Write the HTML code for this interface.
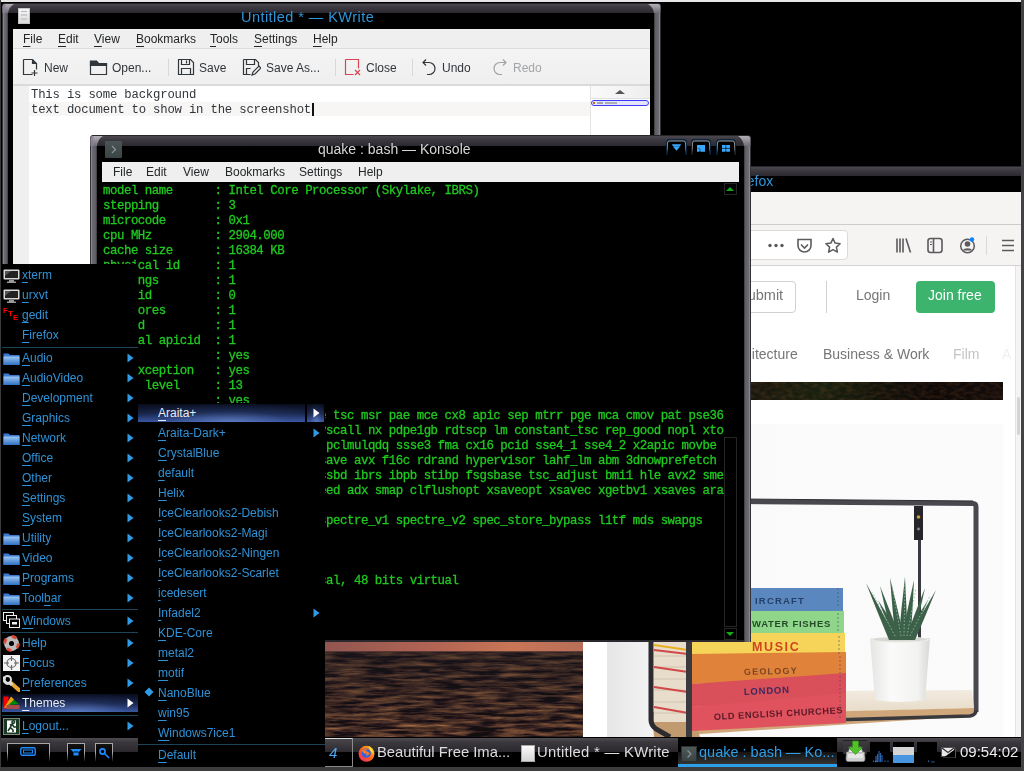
<!DOCTYPE html>
<html><head><meta charset="utf-8">
<style>
*{margin:0;padding:0;box-sizing:border-box}
html,body{width:1024px;height:771px;overflow:hidden;background:#000;font-family:"Liberation Sans",sans-serif}
.a{position:absolute;white-space:nowrap}
.mono{font-family:"Liberation Mono",monospace}
/* top strip */
#strip{left:1px;top:0;width:1020px;height:2px;background:#e6e6e6}
/* window frames */
.frame{background:linear-gradient(#3d3b3f,#2a282c 60%,#232125);border-radius:6px 6px 0 0}
.fl{background:linear-gradient(90deg,#8d8694,#5c5960 40%,#4a474c)}
.fr{background:linear-gradient(90deg,#4a474c,#5c5960 60%,#8d8694)}
.title{background:#000}
/* kwrite */
#kw{left:2px;top:3px;width:659px;height:300px}
.kmenu span{position:absolute;top:0}
u{text-decoration:underline;text-underline-offset:2.5px;text-decoration-thickness:1.3px}
</style></head><body>
<div id="strip" class="a"></div>

<!-- ============ KWRITE ============ -->
<div class="a" style="left:2px;top:3px;width:659px;height:420px;background:#2c292e;border-radius:4px 4px 0 0"></div>
<div class="a" style="left:2px;top:3px;width:659px;height:10px;background:linear-gradient(#2a272b 0,#2a272b 1px,#4c4850 1px,#3e3a42 40%,#2c2830);border-radius:4px 4px 0 0"></div>
<div class="a" style="left:2px;top:6px;width:6px;height:417px;background:linear-gradient(90deg,#333135 0,#333135 0.6px,#8c8096 0.6px,#8c8096 2px,#6e6c74 2px,#5e5c64 80%,#38363a)"></div>
<div class="a" style="left:654px;top:6px;width:7px;height:417px;background:linear-gradient(270deg,#333135 0,#333135 0.6px,#8c8096 0.6px,#8c8096 2px,#6e6c74 2px,#5e5c64 80%,#38363a)"></div>
<svg class="a" style="left:2px;top:3px" width="12" height="10" viewBox="0 0 12 10"><defs><linearGradient id="chkw" x1="0" y1="0" x2="0" y2="1"><stop offset="0" stop-color="#b4b0b8"/><stop offset="1" stop-color="#6e6c74"/></linearGradient></defs><path d="M0.6 10V4Q0.6 1 3.5 1H12Q7 4 6 10z" fill="url(#chkw)"/><path d="M0.6 10V4Q0.6 1 3.5 1V10z" fill="#8c8096" opacity="0.8"/></svg>
<svg class="a" style="left:648px;top:3px" width="13" height="10" viewBox="0 0 13 10"><path d="M12.4 10V4Q12.4 1 9.5 1H0Q5 4 6 10z" fill="url(#chkw)"/></svg>
<div class="a" style="left:8px;top:13px;width:646px;height:410px;background:#000"></div>
<div class="a" style="left:18px;top:8px;width:12px;height:16px;background:linear-gradient(#f6f6f6,#dadada);border:1px solid #c4c4c4"></div>
<div class="a" style="left:21px;top:11px;width:6px;height:1px;background:#bbb"></div><div class="a" style="left:21px;top:14px;width:6px;height:2px;background:#ccc"></div><div class="a" style="left:21px;top:18px;width:6px;height:2px;background:#ccc"></div>
<div class="a" style="left:241px;top:9px;font-size:14.5px;letter-spacing:0.45px;color:#2f95d8;white-space:nowrap">Untitled * — KWrite</div>
<!-- menubar -->
<div class="a" style="left:13px;top:29px;width:637px;height:20px;background:#efefef;border-bottom:1px solid #dcdcdc"></div>
<div class="a kmenu" style="left:0;top:32px;font-size:12px;color:#232627;white-space:nowrap">
<span style="left:23px"><u>F</u>ile</span>
<span style="left:58px"><u>E</u>dit</span>
<span style="left:94px"><u>V</u>iew</span>
<span style="left:136px"><u>B</u>ookmarks</span>
<span style="left:210px"><u>T</u>ools</span>
<span style="left:254px"><u>S</u>ettings</span>
<span style="left:313px"><u>H</u>elp</span>
</div>
<!-- toolbar -->
<div class="a" style="left:13px;top:49px;width:637px;height:37px;background:linear-gradient(#f4f4f4,#efefef);border-bottom:2px solid #dadada"></div>
<div class="a" style="left:0;top:0">
<svg class="a" style="left:22px;top:58px" width="18" height="18" viewBox="0 0 18 18" fill="none" stroke="#31363b" stroke-width="1.2"><path d="M1.5 1.5h9l4 4v6M1.5 1.5v15h9"/><path d="M10.5 1.5v4h4" fill="#31363b"/><path d="M12.5 12v6M9.5 15h6"/></svg>
<div class="a" style="left:44px;top:61px;font-size:12px;color:#31363b">New</div>
<svg class="a" style="left:89px;top:58px" width="19" height="18" viewBox="0 0 19 18" fill="none" stroke="#31363b" stroke-width="1.2"><path d="M1.5 3.5h6l2 2h8v11h-16z"/><path d="M1.5 3h6l2 2.5h8v2h-16z" fill="#31363b"/></svg>
<div class="a" style="left:112px;top:61px;font-size:12px;color:#31363b">Open...</div>
<div class="a" style="left:168px;top:59px;width:1px;height:17px;background:#d8d8d8"></div>
<svg class="a" style="left:177px;top:58px" width="18" height="18" viewBox="0 0 18 18" fill="none" stroke="#31363b" stroke-width="1.2"><path d="M1.5 1.5h12l3 3v12h-15z"/><path d="M4.5 1.5v5h8v-5M4.5 16.5v-6h9v6"/><path d="M9.5 2.5v3"/></svg>
<div class="a" style="left:199px;top:61px;font-size:12px;color:#31363b">Save</div>
<svg class="a" style="left:242px;top:58px" width="19" height="18" viewBox="0 0 19 18" fill="none" stroke="#31363b" stroke-width="1.2"><path d="M1.5 1.5h12l3 3v4M1.5 1.5v15h7"/><path d="M4.5 1.5v5h8v-5M4.5 16.5v-6h4"/><path d="M10 17l1-3 6-6 2 2-6 6z"/></svg>
<div class="a" style="left:266px;top:61px;font-size:12px;color:#31363b">Save As...</div>
<div class="a" style="left:335px;top:59px;width:1px;height:17px;background:#d8d8d8"></div>
<svg class="a" style="left:344px;top:58px" width="18" height="18" viewBox="0 0 18 18" fill="none" stroke="#da4453" stroke-width="1.2"><path d="M1.5 1.5h13v9M1.5 1.5v15h8"/><path d="M11 12l5 5M16 12l-5 5"/></svg>
<div class="a" style="left:366px;top:61px;font-size:12px;color:#31363b">Close</div>
<div class="a" style="left:412px;top:59px;width:1px;height:17px;background:#d8d8d8"></div>
<svg class="a" style="left:421px;top:58px" width="17" height="18" viewBox="0 0 17 18" fill="none" stroke="#31363b" stroke-width="1.2"><path d="M5 1.5l-3 3 3 3M2 4.5h6a6 6 0 0 1 0 12h-2"/></svg>
<div class="a" style="left:442px;top:61px;font-size:12px;color:#31363b">Undo</div>
<svg class="a" style="left:491px;top:58px" width="17" height="18" viewBox="0 0 17 18" fill="none" stroke="#a0a2a4" stroke-width="1.2"><path d="M12 1.5l3 3-3 3M15 4.5h-6a6 6 0 0 0 0 12h2"/></svg>
<div class="a" style="left:513px;top:61px;font-size:12px;color:#a3a5a7">Redo</div>
</div>
<!-- edit area -->
<div class="a" style="left:13px;top:86px;width:577px;height:330px;background:#fff"></div>
<div class="a" style="left:13px;top:86px;width:16px;height:330px;background:#efefef"></div>
<div class="a" style="left:29px;top:102px;width:561px;height:14px;background:#f7f6f5"></div>
<div class="a mono" style="left:31px;top:88px;font-size:12.3px;letter-spacing:-0.2px;line-height:15px;color:#31363b;white-space:pre">This is some background
text document to show in the screenshot</div>
<div class="a" style="left:312px;top:103px;width:2px;height:13px;background:#111"></div>
<!-- minimap -->
<div class="a" style="left:590px;top:86px;width:60px;height:330px;background:#fff;border-left:1px solid #e4e4e4"></div>
<div class="a" style="left:591px;top:86px;width:59px;height:13px;background:linear-gradient(90deg,#fafafa,#eee);border-bottom:1px solid #e0e0e0"></div>
<div class="a" style="left:615px;top:90px;width:0;height:0;border-left:5px solid transparent;border-right:5px solid transparent;border-bottom:4px solid #555"></div>
<div class="a" style="left:591px;top:100px;width:58px;height:6px;border:1.5px solid #3c3cf4;border-radius:3px;background:#e4e4fa"></div>
<div class="a" style="left:593px;top:102px;width:2px;height:2px;background:#c86a20"></div>
<div class="a" style="left:597px;top:102px;width:20px;height:2px;background:linear-gradient(90deg,#777 0 30%,transparent 30% 40%,#888 40% 100%);opacity:.6"></div>

<!-- ============ FIREFOX ============ -->
<div class="a" style="left:662px;top:166px;width:366px;height:580px;background:#2c292e;border-radius:4px 4px 0 0"></div>
<div class="a" style="left:662px;top:166px;width:366px;height:10px;background:linear-gradient(#2a272b 0,#2a272b 1px,#4c4850 1px,#3e3a42 40%,#2c2830);border-radius:4px 4px 0 0"></div>
<div class="a" style="left:662px;top:169px;width:7px;height:577px;background:linear-gradient(90deg,#333135 0,#333135 0.6px,#8c8096 0.6px,#8c8096 2px,#6e6c74 2px,#5e5c64 80%,#38363a)"></div>
<div class="a" style="left:1021px;top:169px;width:7px;height:577px;background:linear-gradient(270deg,#333135 0,#333135 0.6px,#8c8096 0.6px,#8c8096 2px,#6e6c74 2px,#5e5c64 80%,#38363a)"></div>
<svg class="a" style="left:662px;top:166px" width="13" height="10" viewBox="0 0 13 10"><defs><linearGradient id="chff" x1="0" y1="0" x2="0" y2="1"><stop offset="0" stop-color="#b4b0b8"/><stop offset="1" stop-color="#6e6c74"/></linearGradient></defs><path d="M0.6 10V4Q0.6 1 3.5 1H13Q8 4 7 10z" fill="url(#chff)"/><path d="M0.6 10V4Q0.6 1 3.5 1V10z" fill="#8c8096" opacity="0.8"/></svg>
<svg class="a" style="left:1015px;top:166px" width="13" height="10" viewBox="0 0 13 10"><path d="M12.4 10V4Q12.4 1 9.5 1H0Q5 4 6 10z" fill="url(#chff)"/></svg>
<div class="a" style="left:669px;top:176px;width:352px;height:570px;background:#000"></div>
<div class="a" style="left:1005px;top:166px;width:19px;height:10px;background:linear-gradient(#2a272b 0,#2a272b 1px,#4c4850 1px,#3e3a42 40%,#2c2830)"></div>
<div class="a" style="left:1021px;top:176px;width:3px;height:562px;background:linear-gradient(90deg,#38363a,#5e5c64 50%,#6e6c74)"></div>
<div class="a" style="left:683px;top:173px;font-size:14px;color:#2f95d8">Mozilla Firefox</div>
<div class="a" style="left:662px;top:192px;width:359px;height:33px;background:#f5f4f2;border-bottom:1px solid #cfcdcb"></div>
<div class="a" style="left:662px;top:225px;width:359px;height:41px;background:#f5f4f2;border-bottom:1px solid #d5d2cf"></div>
<div class="a" style="left:600px;top:230px;width:248px;height:30px;background:#fff;border:1px solid #dcd9d6;border-radius:4px"></div>
<!-- page actions -->
<svg class="a" style="left:766px;top:237px" width="80" height="17" viewBox="0 0 80 17">
<circle cx="4" cy="8.5" r="1.7" fill="#5b5b5e"/><circle cx="10" cy="8.5" r="1.7" fill="#5b5b5e"/><circle cx="16" cy="8.5" r="1.7" fill="#5b5b5e"/>
<path d="M32 2.5h13v6a6.5 6.5 0 0 1-13 0z" fill="none" stroke="#5b5b5e" stroke-width="1.6"/><path d="M35 7.5l3.5 3.5 3.5-3.5" fill="none" stroke="#5b5b5e" stroke-width="1.6"/>
<path d="M67 1.5l2.1 4.6 5 .6-3.7 3.4 1 5-4.4-2.5-4.4 2.5 1-5-3.7-3.4 5-.6z" fill="none" stroke="#5b5b5e" stroke-width="1.5" stroke-linejoin="round"/>
</svg>
<svg class="a" style="left:894px;top:236px" width="124" height="19" viewBox="0 0 124 19">
<path d="M3 2.5v14M6 2.5v14M9 2.5v14M12 2.5l4.5 14" stroke="#5b5b5e" stroke-width="1.6" fill="none"/>
<rect x="34" y="2.5" width="14" height="14" rx="2.5" fill="none" stroke="#5b5b5e" stroke-width="1.6"/><path d="M39.5 3v13" stroke="#5b5b5e" stroke-width="1.6"/><path d="M36 6h2M36 8.5h2" stroke="#5b5b5e" stroke-width="1"/>
<circle cx="73.5" cy="10" r="6.8" fill="none" stroke="#5b5b5e" stroke-width="1.5"/><circle cx="73.5" cy="8" r="2.8" fill="#5b5b5e"/><path d="M68.5 14.5a5.5 4 0 0 1 10 0" fill="#5b5b5e"/><circle cx="78" cy="3.5" r="2.2" fill="#0a84ff"/>
<path d="M92.5 -7v26" stroke="#dcdad8" stroke-width="1"/>
<path d="M108 4.5h12M108 9.5h12M108 14.5h12" stroke="#5b5b5e" stroke-width="1.6"/>
</svg>
<!-- page -->
<div class="a" style="left:662px;top:266px;width:359px;height:472px;background:#fff"></div>
<div class="a" style="left:1015px;top:266px;width:6px;height:471px;background:#f4f4f4;border-left:1px solid #e4e4e4"></div>
<div class="a" style="left:1017px;top:397px;width:3px;height:38px;background:#d4d4d4;border-radius:2px"></div>
<div class="a" style="left:700px;top:281px;width:96px;height:32px;border:1px solid #d1d1d1;border-radius:4px"></div>
<div class="a" style="left:738px;top:287px;font-size:14.5px;color:#767676">Submit</div>
<div class="a" style="left:826px;top:281px;width:1px;height:32px;background:#d1d1d1"></div>
<div class="a" style="left:856px;top:287px;font-size:14px;color:#767676">Login</div>
<div class="a" style="left:916px;top:281px;width:79px;height:32px;background:#3cb46e;border-radius:4px"></div>
<div class="a" style="left:928px;top:287px;font-size:14px;color:#fff">Join free</div>
<div class="a" style="left:723px;top:346px;font-size:14px;color:#767676">Architecture</div>
<div class="a" style="left:823px;top:346px;font-size:14px;color:#767676">Business &amp; Work</div>
<div class="a" style="left:953px;top:346px;font-size:14px;color:#c4c4c4">Film</div>
<div class="a" style="left:1002px;top:346px;font-size:14px;color:#f0f0f0">A</div>

<!-- photos -->
<div class="a" style="left:300px;top:424px;width:703px;height:314px;background:#fff"></div>
<svg class="a" style="left:300px;top:642px" width="283" height="95" viewBox="0 0 283 95">
<defs>
<filter id="sea" x="0" y="0" width="100%" height="100%" color-interpolation-filters="sRGB">
<feTurbulence type="fractalNoise" baseFrequency="0.03 0.28" numOctaves="4" seed="7" result="n"/>
<feColorMatrix in="n" type="matrix" values="0 0 0 1.5 -0.46  0 0 0 1.0 -0.33  0 0 0 0.5 -0.12  0 0 0 0 1"/>
</filter>
<linearGradient id="sky" x1="0" y1="0" x2="1" y2="0"><stop offset="0" stop-color="#8a5250"/><stop offset="0.5" stop-color="#b46654"/><stop offset="0.75" stop-color="#c87656"/><stop offset="1" stop-color="#b86e58"/></linearGradient>
<linearGradient id="seag" x1="0" y1="0" x2="0" y2="1"><stop offset="0" stop-color="#3a2c2e"/><stop offset="0.5" stop-color="#34282a"/><stop offset="1" stop-color="#4a3630"/></linearGradient>
</defs>
<rect width="283" height="95" fill="url(#seag)"/>
<rect y="10" width="283" height="85" filter="url(#sea)" opacity="0.75"/>
<linearGradient id="seashade" x1="0" y1="0" x2="0" y2="1"><stop offset="0" stop-color="#1e1a1e" stop-opacity="0.55"/><stop offset="0.45" stop-color="#1e1a1e" stop-opacity="0.35"/><stop offset="1" stop-color="#1e1a1e" stop-opacity="0.1"/></linearGradient>
<rect y="10" width="283" height="85" fill="url(#seashade)"/>
<rect width="283" height="10" fill="url(#sky)"/>
<rect y="9" width="283" height="1.5" fill="#3a2a2a" opacity="0.7"/>
</svg>
<svg class="a" style="left:607px;top:424px" width="396" height="313" viewBox="607 424 396 313">
<defs>
<linearGradient id="pbg" x1="0" y1="0" x2="1" y2="0"><stop offset="0" stop-color="#e6e6e6"/><stop offset="0.12" stop-color="#f4f4f4"/><stop offset="0.4" stop-color="#fafafa"/><stop offset="1" stop-color="#fbfbfb"/></linearGradient>
<linearGradient id="pot" x1="0" y1="0" x2="1" y2="0"><stop offset="0" stop-color="#e4e4e2"/><stop offset="0.35" stop-color="#fbfbfb"/><stop offset="0.8" stop-color="#f2f2f0"/><stop offset="1" stop-color="#d8d8d6"/></linearGradient>
<linearGradient id="wood" x1="0" y1="0" x2="0" y2="1"><stop offset="0" stop-color="#f2ebe0"/><stop offset="1" stop-color="#e6d9c4"/></linearGradient>
</defs>
<rect x="607" y="424" width="396" height="313" fill="url(#pbg)"/>
<!-- back frame -->
<path d="M740 501.5L973 503.5Q976 503.5 976 507V712" fill="none" stroke="#48484e" stroke-width="5"/><path d="M740 499L973 501" stroke="#2e2e32" stroke-width="1"/>
<path d="M919.5 506V645" stroke="#3a3a3e" stroke-width="3"/>
<path d="M914 506h9v34h-9z" fill="#26262a"/><circle cx="918.5" cy="517" r="1.8" fill="#c8a040"/><circle cx="918.5" cy="529" r="1.4" fill="#888"/>
<!-- shelf wood -->
<path d="M692 692L972 690 974 708 692 716z" fill="url(#wood)"/>
<path d="M650 716L974 708 972 716 656 737z" fill="#cfa77a"/>
<path d="M652 712L654 737H700L692 712z" fill="#c29a70"/>
<!-- outer left bar -->
<path d="M651 642V720q0 5 5 9l14 8" fill="none" stroke="#2c2c30" stroke-width="5"/>
<path d="M976 710q0 5-6 6L690 724" fill="none" stroke="#3a3a3e" stroke-width="3.5"/>
<!-- page edges -->
<rect x="654" y="642" width="34" height="80" fill="#e8ddca"/>
<path d="M654 656h34M654 667h34M654 679h34M654 690h34M654 702h34M654 713h34" stroke="#cbbfa9" stroke-width="0.8"/>
<path d="M654 650l34 4M654 667l34 5M654 687l34 5M654 707l34 6" stroke="#d04848" stroke-width="2.2"/>
<path d="M654 645l34 5" stroke="#e8b020" stroke-width="2"/>
<!-- books -->
<path d="M750 588H843V611H750z" fill="#5a88be"/>
<path d="M750 611H844V633H750z" fill="#8fd68a"/>
<path d="M692 633H845V656H692z" fill="#f6d45a"/>
<path d="M692 654L846 652 846 680 692 684z" fill="#e0823a"/>
<path d="M692 684L846 673 846 701 692 707z" fill="#d94f5a"/>
<path d="M692 707L846 693 846 723 692 731z" fill="#e0535e"/>
<path d="M838 588v20M838 613v18M839 636v18M840 656v22M840 676v22M840 696v24" stroke="#4a4a6a" stroke-width="1.2" stroke-dasharray="2 2" opacity="0.5"/>
<text x="755" y="603.5" font-family="Liberation Sans" font-weight="bold" font-size="9.5" fill="#24406a" letter-spacing="1.2">IRCRAFT</text>
<text x="752" y="627" font-family="Liberation Sans" font-weight="bold" font-size="9.5" fill="#244a28" letter-spacing="0.7">WATER FISHES</text>
<text x="752" y="651" font-family="Liberation Sans" font-weight="bold" font-size="12.5" fill="#d04420" letter-spacing="1.6">MUSIC</text>
<text x="744" y="675" font-family="Liberation Sans" font-weight="bold" font-size="9" fill="#7a4622" letter-spacing="1.2" transform="rotate(-1.5 744 675)">GEOLOGY</text>
<text x="744" y="695" font-family="Liberation Sans" font-weight="bold" font-size="9.5" fill="#3a2a60" letter-spacing="0.8" transform="rotate(-2.5 744 695)">LONDON</text>
<text x="714" y="720" font-family="Liberation Sans" font-weight="bold" font-size="9.2" fill="#5a1a28" letter-spacing="0.6" transform="rotate(-3 714 720)">OLD ENGLISH CHURCHES</text>
<!-- inner left bar -->
<path d="M689 642V737" stroke="#3a3a3e" stroke-width="6"/>
<!-- pot & plant -->
<path d="M870 638h60l-5 62q-25 4-50 0z" fill="url(#pot)"/>
<ellipse cx="900" cy="639.5" rx="30" ry="3" fill="#ebebe8"/>
<ellipse cx="900" cy="639.5" rx="27" ry="2" fill="#d8d8d2"/>
<g><path d="M889 640Q877.1 611.5 866 583Q881.9 611.5 897 640z" fill="#3d6049"/><path d="M893 640Q886.1 613.0 880 586Q890.9 613.0 901 640z" fill="#3d6049"/><path d="M895.5 640Q892.3 609.0 890 578Q897.7 609.0 904.5 640z" fill="#3d6049"/><path d="M898.5 640Q901.3 608.5 905 577Q906.7 608.5 907.5 640z" fill="#3d6049"/><path d="M901.5 640Q907.3 610.0 914 580Q912.7 610.0 910.5 640z" fill="#3d6049"/><path d="M905 640Q914.6 614.0 925 588Q919.4 614.0 913 640z" fill="#3d6049"/><path d="M907 640Q921.1 615.0 936 590Q925.9 615.0 915 640z" fill="#3d6049"/><path d="M895 640Q886.1 620.0 878 600Q890.9 620.0 903 640z" fill="#3d6049"/><path d="M903 640Q915.1 620.0 928 600Q919.9 620.0 911 640z" fill="#3d6049"/><path d="M895 636L872 592M901 636L892 586M904 636L905 584M907 636L916 588M910 636L930 596" stroke="#8fb8a0" stroke-width="0.9" stroke-dasharray="1.5 2" fill="none"/></g>
</svg>
<svg class="a" style="left:600px;top:382px" width="403" height="18" viewBox="0 0 403 18"><defs><filter id="leaf" x="0" y="0" width="100%" height="100%" color-interpolation-filters="sRGB"><feTurbulence type="fractalNoise" baseFrequency="0.15 0.3" numOctaves="2" seed="3"/><feColorMatrix type="matrix" values="0 0 0 0.9 -0.33  0 0 0 0.5 -0.2  0 0 0 0.2 -0.08  0 0 0 0 1"/></filter>
<linearGradient id="lg" x1="0" y1="0" x2="1" y2="0"><stop offset="0" stop-color="#1e2814"/><stop offset="0.3" stop-color="#1a140e"/><stop offset="0.55" stop-color="#18200f"/><stop offset="0.8" stop-color="#0e0a08"/><stop offset="1" stop-color="#120c0a"/></linearGradient></defs>
<rect width="403" height="18" fill="url(#lg)"/><rect width="403" height="18" filter="url(#leaf)" opacity="0.3" style="mix-blend-mode:screen"/></svg>


<!-- ============ KONSOLE ============ -->
<div class="a" style="left:90px;top:135px;width:661px;height:507px;background:#2c292e;border-radius:4px 4px 0 0"></div>
<div class="a" style="left:90px;top:135px;width:661px;height:11px;background:linear-gradient(#2a272b 0,#2a272b 1px,#4c4850 1px,#3e3a42 40%,#2c2830);border-radius:4px 4px 0 0"></div>
<div class="a" style="left:90px;top:138px;width:7px;height:504px;background:linear-gradient(90deg,#333135 0,#333135 0.6px,#8c8096 0.6px,#8c8096 2px,#6e6c74 2px,#5e5c64 80%,#38363a)"></div>
<div class="a" style="left:744px;top:138px;width:7px;height:504px;background:linear-gradient(270deg,#333135 0,#333135 0.6px,#8c8096 0.6px,#8c8096 2px,#6e6c74 2px,#5e5c64 80%,#38363a)"></div>
<svg class="a" style="left:90px;top:135px" width="13" height="11" viewBox="0 0 13 11"><defs><linearGradient id="chko" x1="0" y1="0" x2="0" y2="1"><stop offset="0" stop-color="#b4b0b8"/><stop offset="1" stop-color="#6e6c74"/></linearGradient></defs><path d="M0.6 11V4Q0.6 1 3.5 1H13Q8 4 7 11z" fill="url(#chko)"/><path d="M0.6 11V4Q0.6 1 3.5 1V11z" fill="#8c8096" opacity="0.8"/></svg>
<svg class="a" style="left:738px;top:135px" width="13" height="11" viewBox="0 0 13 11"><path d="M12.4 11V4Q12.4 1 9.5 1H0Q5 4 6 11z" fill="url(#chko)"/></svg>
<div class="a" style="left:97px;top:146px;width:647px;height:494px;background:#000"></div>
<div class="a" style="left:105px;top:141px;width:17px;height:17px;background:linear-gradient(#4a5454,#3a4444);border-radius:1px"></div>
<svg class="a" style="left:105px;top:141px" width="17" height="17"><path d="M7 5l3.5 3.5L7 12" fill="none" stroke="#8a9494" stroke-width="1.2"/></svg>
<div class="a" style="left:318px;top:141px;font-size:14px;color:#d6d6d6">quake : bash — Konsole</div>
<svg class="a" style="left:664px;top:138px" width="76" height="18" viewBox="0 0 76 18">
<defs><linearGradient id="bst" x1="0" y1="0" x2="0" y2="1"><stop offset="0" stop-color="#a0a0a0"/><stop offset="0.6" stop-color="#606060"/><stop offset="1" stop-color="#000" stop-opacity="0"/></linearGradient>
<filter id="glow" x="-50%" y="-50%" width="200%" height="200%"><feGaussianBlur stdDeviation="0.7" result="b"/><feMerge><feMergeNode in="b"/><feMergeNode in="SourceGraphic"/></feMerge></filter></defs>
<g fill="none" stroke="#0a2440" stroke-width="2"><path d="M3 17V4.5Q3 2 5.5 2H19.5Q22 2 22 4.5V17"/><path d="M28 17V4.5Q28 2 30.5 2H43.5Q46 2 46 4.5V17"/><path d="M53 17V4.5Q53 2 55.5 2H68.5Q71 2 71 4.5V17"/></g>
<g fill="#000" stroke="url(#bst)" stroke-width="1"><path d="M3.5 17V5Q3.5 3 5.5 3H19.5Q21.5 3 21.5 5V17"/><path d="M28.5 17V5Q28.5 3 30.5 3H43.5Q45.5 3 45.5 5V17"/><path d="M53.5 17V5Q53.5 3 55.5 3H68.5Q70.5 3 70.5 5V17"/></g>
<g fill="#38a8ff" filter="url(#glow)">
<path d="M8 6.5h9l-1.5 2h-6z M9.5 9h6l-3 3.5z"/>
<path d="M33 7h8v6.5h-4.5v-3h-3.5z M33 11h2.5v2.5h-2.5z"/>
<path d="M58 7h3.4v2.8h-3.4zM62.4 7h3.4v2.8h-3.4zM58 10.8h3.4v2.8h-3.4zM62.4 10.8h3.4v2.8h-3.4z"/>
</g>
</svg>
<div class="a" style="left:102px;top:162px;width:637px;height:20px;background:#efefef"></div>
<div class="a" style="left:0;top:165px;font-size:12px;color:#232627">
<span class="a" style="left:113px">File</span><span class="a" style="left:146px">Edit</span><span class="a" style="left:183px">View</span><span class="a" style="left:225px">Bookmarks</span><span class="a" style="left:299px">Settings</span><span class="a" style="left:358px">Help</span>
</div>
<div class="a mono" style="left:103px;top:184px;font-size:12.4px;letter-spacing:-0.465px;line-height:15px;color:#20c820;white-space:pre;-webkit-text-stroke:0.3px #20c820">model name      : Intel Core Processor (Skylake, IBRS)
stepping        : 3
microcode       : 0x1
cpu MHz         : 2904.000
cache size      : 16384 KB
physical id     : 1
siblings        : 1
core id         : 0
cpu cores       : 1
apicid          : 1
initial apicid  : 1
fpu             : yes
fpu_exception   : yes
cpuid level     : 13
wp              : yes
flags           : fpu vme de pse tsc msr pae mce cx8 apic sep mtrr pge mca cmov pat pse36
 clflush mmx fxsr sse sse2 ss syscall nx pdpe1gb rdtscp lm constant_tsc rep_good nopl xto
pology cpuid tsc_known_freq pni pclmulqdq ssse3 fma cx16 pcid sse4_1 sse4_2 x2apic movbe 
popcnt tsc_deadline_timer aes xsave avx f16c rdrand hypervisor lahf_lm abm 3dnowprefetch 
cpuid_fault invpcid_single pti ssbd ibrs ibpb stibp fsgsbase tsc_adjust bmi1 hle avx2 sme
p bmi2 erms invpcid rtm mpx rdseed adx smap clflushopt xsaveopt xsavec xgetbv1 xsaves ara
t md_clear
bugs            : cpu_meltdown spectre_v1 spectre_v2 spec_store_bypass l1tf mds swapgs
bogomips        : 5808.00
clflush size    : 64
cache_alignment : 64
address sizes   : 40 bits physical, 48 bits virtual
power management:

</div>
<div class="a" style="left:724px;top:183px;width:13px;height:12px;border:1px solid #262626"></div>
<div class="a" style="left:726px;top:187px;width:0;height:0;border-left:4.5px solid transparent;border-right:4.5px solid transparent;border-bottom:4px solid #18a818"></div>
<div class="a" style="left:724px;top:437px;width:13px;height:190px;border:1px solid #262626"></div>
<div class="a" style="left:724px;top:628px;width:13px;height:12px;border:1px solid #262626"></div>
<div class="a" style="left:726px;top:632px;width:0;height:0;border-left:4.5px solid transparent;border-right:4.5px solid transparent;border-top:4px solid #18a818"></div>

<!-- ============ TASKBAR ============ -->
<div class="a" style="left:0;top:737px;width:1024px;height:34px;background:#000"></div>
<div class="a" style="left:1px;top:738px;width:1023px;height:14px;background:linear-gradient(#4e4c50,#3a383c 30%,#2a282c)"></div>
<div class="a" style="left:0;top:767px;width:1024px;height:4px;background:#3c3b3e"></div>
<!-- left buttons -->
<div class="a" style="left:7px;top:743px;width:43px;height:19px;border:1px solid #a8a8a8;border-bottom:none;background:linear-gradient(#141414,#000 50%);-webkit-mask-image:linear-gradient(#000 50%,transparent)"></div>
<svg class="a" style="left:20px;top:747px" width="16" height="9" viewBox="0 0 16 9"><rect x="0.8" y="0.8" width="14.4" height="7.4" rx="1.5" fill="none" stroke="#1e8cff" stroke-width="1.4"/><rect x="3.5" y="3" width="9" height="3" fill="none" stroke="#1e8cff" stroke-width="1"/></svg>
<div class="a" style="left:67px;top:743px;width:18px;height:19px;border:1px solid #a8a8a8;border-bottom:none;background:linear-gradient(#141414,#000 50%);-webkit-mask-image:linear-gradient(#000 50%,transparent)"></div>
<svg class="a" style="left:70px;top:748px" width="12" height="8" viewBox="0 0 12 8"><path d="M0.5 1h11l-3 3.5v3h-5v-3z" fill="#1e8cff"/><path d="M3.5 4h5" stroke="#000" stroke-width="1"/></svg>
<div class="a" style="left:95px;top:743px;width:18px;height:19px;border:1px solid #a8a8a8;border-bottom:none;background:linear-gradient(#141414,#000 50%);-webkit-mask-image:linear-gradient(#000 50%,transparent)"></div>
<svg class="a" style="left:98px;top:747px" width="12" height="12" viewBox="0 0 12 12"><circle cx="4.5" cy="4.5" r="2.6" fill="none" stroke="#1e8cff" stroke-width="1.6"/><path d="M6.5 6.5l4.5 4.5" stroke="#1e8cff" stroke-width="1.6"/></svg>
<!-- workspace 4 -->
<div class="a" style="left:325px;top:738px;width:28px;height:29px;border-top:1px solid #d8d8d8;border-right:1px solid #8a8a8a;border-bottom:1px solid #8a8a8a;background:linear-gradient(#48464a,#2c2a2e 13px,#000 13px)"></div>
<div class="a" style="left:329px;top:744px;font-size:15px;font-style:italic;color:#4aa8f0">4</div>
<!-- tasks -->
<svg class="a" style="left:358px;top:745px" width="17" height="17" viewBox="0 0 17 17"><defs><linearGradient id="ffo" x1="0" y1="1" x2="1" y2="0"><stop offset="0" stop-color="#e8207a"/><stop offset="0.45" stop-color="#ff5a1e"/><stop offset="1" stop-color="#ffd21a"/></linearGradient></defs><circle cx="8.5" cy="8.8" r="8" fill="url(#ffo)"/><circle cx="8.2" cy="8.2" r="4.6" fill="#2a62e8"/><path d="M4 6q3-3 6-1.5-2 0-2.5 1.5 3 0 4 2.5-1 2.5-4 2.5q2-1 1-2.5-2 1.5-4.5-2.5z" fill="#ff7a1a"/><path d="M11 1q5 3 4.5 9-1-3-3-4z" fill="#ffe030"/></svg>
<div class="a" style="left:377px;top:744px;font-size:14.8px;color:#dcdcdc">Beautiful Free Ima...</div>
<div class="a" style="left:521px;top:745px;width:14px;height:17px;background:linear-gradient(#fbfbfb,#d4d4d4);border:1px solid #aaa"></div>
<div class="a" style="left:537px;top:744px;font-size:14.8px;color:#dcdcdc;letter-spacing:0.3px">Untitled * — KWrite</div>
<div class="a" style="left:678px;top:738px;width:159px;height:14px;background:#000"></div>
<div class="a" style="left:678px;top:752px;width:159px;height:12px;background:linear-gradient(#141414,#333)"></div>
<div class="a" style="left:678px;top:764px;width:159px;height:3px;background:#2d9ee8"></div>
<div class="a" style="left:681px;top:746px;width:16px;height:16px;background:linear-gradient(#4f5959,#3a4343);border:1px solid #2a3030"></div>
<svg class="a" style="left:681px;top:746px" width="16" height="16"><path d="M6.5 4.5l3.5 3.5-3.5 3.5" fill="none" stroke="#8a9494" stroke-width="1.2"/></svg>
<div class="a" style="left:699px;top:744px;font-size:14.5px;color:#2d9ee8">quake : bash — Ko...</div>
<!-- tray -->
<div class="a" style="left:840px;top:738px;width:184px;height:14px;background:linear-gradient(#4e4c50,#3a383c 30%,#2a282c)"></div>
<div class="a" style="left:843px;top:740px;width:24px;height:14px;background:linear-gradient(#3e3c40,#2e2c30);border-top:1px solid #222"></div>
<svg class="a" style="left:845px;top:740px" width="21" height="23" viewBox="0 0 21 23"><path d="M1.5 12h18l0.5 7q0 2.5-2 2.5H3q-2 0-2-2.5z" fill="#cfcfcf" stroke="#8a8a8a" stroke-width="0.7"/><path d="M3.5 12l1.5-5h11l1.5 5" fill="#e8e8e8" stroke="#a0a0a0" stroke-width="0.7"/><path d="M3 14h15v4H3z" fill="#e6e6e6"/><path d="M7.5 1h6v6.5h4l-7 7-7-7h4z" fill="#52c22a" stroke="#2f8f14" stroke-width="0.7"/></svg>
<div class="a" style="left:870px;top:742px;width:20px;height:21px;background:#000"></div>
<svg class="a" style="left:870px;top:742px" width="20" height="21" viewBox="0 0 20 21"><path d="M3.5 20v-1.5M6 20v-6M7.5 20v-8M9 20v-11M10.5 20v-9M12 20v-7M15 20v-1.5M18 20v-1.5" stroke="#2a64b0" stroke-width="1.1"/><path d="M5 19.5h1.5" stroke="#3d8de0" stroke-width="1.5"/></svg>
<div class="a" style="left:893px;top:742px;width:21px;height:21px;background:#000"></div>
<div class="a" style="left:893px;top:747px;width:21px;height:16px;background:linear-gradient(#d4d4d4 0,#d4d4d4 50%,#4896e0 50%)"></div>
<div class="a" style="left:917px;top:742px;width:20px;height:21px;background:#000"></div>
<svg class="a" style="left:917px;top:742px" width="20" height="21" viewBox="0 0 20 21"><path d="M11.5 20v-1.5M14.5 20h3" stroke="#2a64b0" stroke-width="1.2"/></svg>
<svg class="a" style="left:941px;top:747px" width="15" height="11" viewBox="0 0 15 11"><rect x="0.5" y="0.5" width="13" height="9" fill="#e8e8e8" stroke="#555"/><path d="M1 1l6 4.5L13 1" fill="none" stroke="#333" stroke-width="1.2"/><path d="M14.5 2v9H2" stroke="#555"/></svg>
<div class="a" style="left:960px;top:743px;font-size:15px;color:#ececec">09:54:02</div>

<!-- ============ MENU ============ -->
<div class="a" style="left:0;top:264px;width:138px;height:474px;background:#000"></div>
<div class="a" style="left:22px;top:265px;height:20px;line-height:20px;font-size:12px;color:#2f92d6"><u>x</u>term</div><svg class="a" style="left:3px;top:269px" width="17" height="15" viewBox="0 0 17 15"><rect x="0.5" y="0.5" width="16" height="10" rx="1" fill="#d8d8d8"/><rect x="2" y="2" width="13" height="7" fill="#222"/><path d="M2 2l6 0-6 5z" fill="#555"/><path d="M6 11h5v1.5h2v1.5h-9v-1.5h2z" fill="#9a9a9a"/></svg><div class="a" style="left:22px;top:285px;height:20px;line-height:20px;font-size:12px;color:#2f92d6"><u>u</u>rxvt</div><svg class="a" style="left:3px;top:289px" width="17" height="15" viewBox="0 0 17 15"><rect x="0.5" y="0.5" width="16" height="10" rx="1" fill="#d8d8d8"/><rect x="2" y="2" width="13" height="7" fill="#222"/><path d="M2 2l6 0-6 5z" fill="#555"/><path d="M6 11h5v1.5h2v1.5h-9v-1.5h2z" fill="#9a9a9a"/></svg><div class="a" style="left:22px;top:305px;height:20px;line-height:20px;font-size:12px;color:#2f92d6"><u>g</u>edit</div><div class="a" style="left:3px;top:307px;width:17px;height:16px;font-size:8px;color:#f00;font-weight:bold;line-height:8px"><span class="a" style="left:0;top:0">F</span><span class="a" style="left:5px;top:3px">T</span><span class="a" style="left:10px;top:7px">E</span></div><div class="a" style="left:22px;top:325px;height:20px;line-height:20px;font-size:12px;color:#2f92d6"><u>F</u>irefox</div><div class="a" style="left:2px;top:347px;width:136px;height:1px;background:#1c4458"></div>
<div class="a" style="left:22px;top:348px;height:20px;line-height:20px;font-size:12px;color:#2f92d6"><u>A</u>udio</div><svg class="a" style="left:3px;top:352px" width="17" height="14" viewBox="0 0 17 14"><defs><linearGradient id="fg0" x1="0" y1="0" x2="0" y2="1"><stop offset="0" stop-color="#9cc8f4"/><stop offset="1" stop-color="#2f6fc4"/></linearGradient></defs><path d="M0.5 1.5h5l1.5 1.5h9.5v10h-16z" fill="#3a7ad0"/><path d="M0.5 4.5h16v8.5h-16z" fill="url(#fg0)"/></svg><svg class="a" style="left:127px;top:353px" width="7" height="10" viewBox="0 0 7 10"><path d="M0.5 0.5L6.5 5 0.5 9.5z" fill="#2f9ae6"/></svg><div class="a" style="left:22px;top:368px;height:20px;line-height:20px;font-size:12px;color:#2f92d6"><u>A</u>udioVideo</div><svg class="a" style="left:3px;top:372px" width="17" height="14" viewBox="0 0 17 14"><defs><linearGradient id="fg1" x1="0" y1="0" x2="0" y2="1"><stop offset="0" stop-color="#9cc8f4"/><stop offset="1" stop-color="#2f6fc4"/></linearGradient></defs><path d="M0.5 1.5h5l1.5 1.5h9.5v10h-16z" fill="#3a7ad0"/><path d="M0.5 4.5h16v8.5h-16z" fill="url(#fg1)"/></svg><svg class="a" style="left:127px;top:373px" width="7" height="10" viewBox="0 0 7 10"><path d="M0.5 0.5L6.5 5 0.5 9.5z" fill="#2f9ae6"/></svg><div class="a" style="left:22px;top:388px;height:20px;line-height:20px;font-size:12px;color:#2f92d6"><u>D</u>evelopment</div><svg class="a" style="left:127px;top:393px" width="7" height="10" viewBox="0 0 7 10"><path d="M0.5 0.5L6.5 5 0.5 9.5z" fill="#2f9ae6"/></svg><div class="a" style="left:22px;top:408px;height:20px;line-height:20px;font-size:12px;color:#2f92d6"><u>G</u>raphics</div><svg class="a" style="left:127px;top:413px" width="7" height="10" viewBox="0 0 7 10"><path d="M0.5 0.5L6.5 5 0.5 9.5z" fill="#2f9ae6"/></svg><div class="a" style="left:22px;top:428px;height:20px;line-height:20px;font-size:12px;color:#2f92d6"><u>N</u>etwork</div><svg class="a" style="left:3px;top:432px" width="17" height="14" viewBox="0 0 17 14"><defs><linearGradient id="fg4" x1="0" y1="0" x2="0" y2="1"><stop offset="0" stop-color="#9cc8f4"/><stop offset="1" stop-color="#2f6fc4"/></linearGradient></defs><path d="M0.5 1.5h5l1.5 1.5h9.5v10h-16z" fill="#3a7ad0"/><path d="M0.5 4.5h16v8.5h-16z" fill="url(#fg4)"/></svg><svg class="a" style="left:127px;top:433px" width="7" height="10" viewBox="0 0 7 10"><path d="M0.5 0.5L6.5 5 0.5 9.5z" fill="#2f9ae6"/></svg><div class="a" style="left:22px;top:448px;height:20px;line-height:20px;font-size:12px;color:#2f92d6"><u>O</u>ffice</div><svg class="a" style="left:127px;top:453px" width="7" height="10" viewBox="0 0 7 10"><path d="M0.5 0.5L6.5 5 0.5 9.5z" fill="#2f9ae6"/></svg><div class="a" style="left:22px;top:468px;height:20px;line-height:20px;font-size:12px;color:#2f92d6"><u>O</u>ther</div><svg class="a" style="left:127px;top:473px" width="7" height="10" viewBox="0 0 7 10"><path d="M0.5 0.5L6.5 5 0.5 9.5z" fill="#2f9ae6"/></svg><div class="a" style="left:22px;top:488px;height:20px;line-height:20px;font-size:12px;color:#2f92d6"><u>S</u>ettings</div><svg class="a" style="left:127px;top:493px" width="7" height="10" viewBox="0 0 7 10"><path d="M0.5 0.5L6.5 5 0.5 9.5z" fill="#2f9ae6"/></svg><div class="a" style="left:22px;top:508px;height:20px;line-height:20px;font-size:12px;color:#2f92d6"><u>S</u>ystem</div><svg class="a" style="left:127px;top:513px" width="7" height="10" viewBox="0 0 7 10"><path d="M0.5 0.5L6.5 5 0.5 9.5z" fill="#2f9ae6"/></svg><div class="a" style="left:22px;top:528px;height:20px;line-height:20px;font-size:12px;color:#2f92d6"><u>U</u>tility</div><svg class="a" style="left:3px;top:532px" width="17" height="14" viewBox="0 0 17 14"><defs><linearGradient id="fg9" x1="0" y1="0" x2="0" y2="1"><stop offset="0" stop-color="#9cc8f4"/><stop offset="1" stop-color="#2f6fc4"/></linearGradient></defs><path d="M0.5 1.5h5l1.5 1.5h9.5v10h-16z" fill="#3a7ad0"/><path d="M0.5 4.5h16v8.5h-16z" fill="url(#fg9)"/></svg><svg class="a" style="left:127px;top:533px" width="7" height="10" viewBox="0 0 7 10"><path d="M0.5 0.5L6.5 5 0.5 9.5z" fill="#2f9ae6"/></svg><div class="a" style="left:22px;top:548px;height:20px;line-height:20px;font-size:12px;color:#2f92d6"><u>V</u>ideo</div><svg class="a" style="left:3px;top:552px" width="17" height="14" viewBox="0 0 17 14"><defs><linearGradient id="fg10" x1="0" y1="0" x2="0" y2="1"><stop offset="0" stop-color="#9cc8f4"/><stop offset="1" stop-color="#2f6fc4"/></linearGradient></defs><path d="M0.5 1.5h5l1.5 1.5h9.5v10h-16z" fill="#3a7ad0"/><path d="M0.5 4.5h16v8.5h-16z" fill="url(#fg10)"/></svg><svg class="a" style="left:127px;top:553px" width="7" height="10" viewBox="0 0 7 10"><path d="M0.5 0.5L6.5 5 0.5 9.5z" fill="#2f9ae6"/></svg><div class="a" style="left:22px;top:568px;height:20px;line-height:20px;font-size:12px;color:#2f92d6"><u>P</u>rograms</div><svg class="a" style="left:3px;top:572px" width="17" height="14" viewBox="0 0 17 14"><defs><linearGradient id="fg11" x1="0" y1="0" x2="0" y2="1"><stop offset="0" stop-color="#9cc8f4"/><stop offset="1" stop-color="#2f6fc4"/></linearGradient></defs><path d="M0.5 1.5h5l1.5 1.5h9.5v10h-16z" fill="#3a7ad0"/><path d="M0.5 4.5h16v8.5h-16z" fill="url(#fg11)"/></svg><svg class="a" style="left:127px;top:573px" width="7" height="10" viewBox="0 0 7 10"><path d="M0.5 0.5L6.5 5 0.5 9.5z" fill="#2f9ae6"/></svg><div class="a" style="left:22px;top:588px;height:20px;line-height:20px;font-size:12px;color:#2f92d6">Tool<u>b</u>ar</div><svg class="a" style="left:3px;top:592px" width="17" height="14" viewBox="0 0 17 14"><defs><linearGradient id="fg12" x1="0" y1="0" x2="0" y2="1"><stop offset="0" stop-color="#9cc8f4"/><stop offset="1" stop-color="#2f6fc4"/></linearGradient></defs><path d="M0.5 1.5h5l1.5 1.5h9.5v10h-16z" fill="#3a7ad0"/><path d="M0.5 4.5h16v8.5h-16z" fill="url(#fg12)"/></svg><svg class="a" style="left:127px;top:593px" width="7" height="10" viewBox="0 0 7 10"><path d="M0.5 0.5L6.5 5 0.5 9.5z" fill="#2f9ae6"/></svg><div class="a" style="left:2px;top:609px;width:136px;height:1px;background:#1c4458"></div>
<div class="a" style="left:22px;top:611px;height:20px;line-height:20px;font-size:12px;color:#2f92d6"><u>W</u>indows</div><svg class="a" style="left:3px;top:612px" width="17" height="16" viewBox="0 0 17 16"><rect x="0.5" y="0.5" width="10" height="8" fill="#000" stroke="#eee"/><rect x="3.5" y="3.5" width="10" height="8" fill="#000" stroke="#eee"/><rect x="6.5" y="7" width="10" height="8.5" fill="#000" stroke="#eee"/><rect x="9" y="10" width="5" height="2.5" fill="#eee"/></svg><svg class="a" style="left:127px;top:616px" width="7" height="10" viewBox="0 0 7 10"><path d="M0.5 0.5L6.5 5 0.5 9.5z" fill="#2f9ae6"/></svg><div class="a" style="left:2px;top:632px;width:136px;height:1px;background:#1c4458"></div>
<div class="a" style="left:22px;top:633px;height:20px;line-height:20px;font-size:12px;color:#2f92d6"><u>H</u>elp</div><svg class="a" style="left:3px;top:635px" width="17" height="17" viewBox="0 0 17 17"><circle cx="8.5" cy="8.5" r="7.5" fill="#bbb"/><circle cx="8.5" cy="8.5" r="7" fill="none" stroke="#d84a3a" stroke-width="3" stroke-dasharray="5 6"/><circle cx="8.5" cy="8.5" r="2.5" fill="#000"/></svg><svg class="a" style="left:127px;top:638px" width="7" height="10" viewBox="0 0 7 10"><path d="M0.5 0.5L6.5 5 0.5 9.5z" fill="#2f9ae6"/></svg><div class="a" style="left:22px;top:653px;height:20px;line-height:20px;font-size:12px;color:#2f92d6"><u>F</u>ocus</div><svg class="a" style="left:3px;top:655px" width="17" height="16" viewBox="0 0 17 16"><rect width="17" height="16" fill="#f4f4f4"/><circle cx="8.5" cy="8" r="4.5" fill="none" stroke="#666" stroke-width="1.2"/><path d="M8.5 1v5M8.5 10v5M1 8h5M11 8h5" stroke="#666" stroke-width="1.2"/></svg><svg class="a" style="left:127px;top:658px" width="7" height="10" viewBox="0 0 7 10"><path d="M0.5 0.5L6.5 5 0.5 9.5z" fill="#2f9ae6"/></svg><div class="a" style="left:22px;top:673px;height:20px;line-height:20px;font-size:12px;color:#2f92d6"><u>P</u>references</div><svg class="a" style="left:3px;top:675px" width="17" height="17" viewBox="0 0 17 17"><path d="M8 8l8 7" stroke="#e8a838" stroke-width="4" stroke-linecap="round"/><path d="M2 2a4 4 0 0 0 5 6l2 2" stroke="#ddd" stroke-width="3" fill="none"/><circle cx="4.5" cy="4.5" r="3.5" fill="none" stroke="#ddd" stroke-width="2"/></svg><svg class="a" style="left:127px;top:678px" width="7" height="10" viewBox="0 0 7 10"><path d="M0.5 0.5L6.5 5 0.5 9.5z" fill="#2f9ae6"/></svg><div class="a" style="left:2px;top:694px;width:136px;height:18px;background:radial-gradient(ellipse 65% 110% at 55% 100%,rgba(110,145,215,.6),rgba(60,90,160,.2) 55%,rgba(0,0,0,0) 100%),linear-gradient(#080c1c,#182448 55%,#3a56a0)"></div>
<div class="a" style="left:22px;top:693px;height:20px;line-height:20px;font-size:12px;color:#e8eef8"><u>T</u>hemes</div><svg class="a" style="left:3px;top:696px" width="17" height="14" viewBox="0 0 17 14"><path d="M0.5 0.5h5v12h-5z" fill="#f00"/><path d="M1 12L8 0.5l3 3-6 8z" fill="#e8a010"/><path d="M5 9l6-5 5 4z" fill="#080"/><rect x="3.5" y="9" width="13" height="4" fill="#a84a48"/></svg><svg class="a" style="left:127px;top:698px" width="7" height="10" viewBox="0 0 7 10"><path d="M0.5 0.5L6.5 5 0.5 9.5z" fill="#fff"/></svg><div class="a" style="left:2px;top:715px;width:136px;height:1px;background:#1c4458"></div>
<div class="a" style="left:22px;top:716px;height:20px;line-height:20px;font-size:12px;color:#2f92d6"><u>L</u>ogout...</div><svg class="a" style="left:3px;top:718px" width="17" height="17" viewBox="0 0 17 17"><rect x="0.5" y="0.5" width="16" height="16" fill="#1a3a24" stroke="#7a8a7a"/><rect x="4" y="2.5" width="9" height="12" fill="#fff"/><path d="M9 4a1.3 1.3 0 1 1 0 .1zM7 7l2-1 2 3 2 0M9 6l-2 4 -2 3M8 10l2 2v2" stroke="#1a3a24" stroke-width="1.6" fill="none"/></svg><svg class="a" style="left:127px;top:721px" width="7" height="10" viewBox="0 0 7 10"><path d="M0.5 0.5L6.5 5 0.5 9.5z" fill="#2f9ae6"/></svg>
<!-- submenu -->
<div class="a" style="left:138px;top:403px;width:187px;height:364px;background:#000"></div>
<div class="a" style="left:138px;top:404px;width:167px;height:18px;background:radial-gradient(ellipse 65% 110% at 55% 100%,rgba(110,145,215,.6),rgba(60,90,160,.2) 55%,rgba(0,0,0,0) 100%),linear-gradient(#080c1c,#182448 55%,#3a56a0)"></div>
<div class="a" style="left:307px;top:404px;width:17px;height:18px;background:radial-gradient(ellipse 65% 110% at 55% 100%,rgba(110,145,215,.6),rgba(60,90,160,.2) 55%,rgba(0,0,0,0) 100%),linear-gradient(#080c1c,#182448 55%,#3a56a0)"></div>
<div class="a" style="left:158px;top:403px;height:20px;line-height:20px;font-size:12px;color:#e8eef8"><u>A</u>raita+</div><svg class="a" style="left:313px;top:408px" width="7" height="10" viewBox="0 0 7 10"><path d="M0.5 0.5L6.5 5 0.5 9.5z" fill="#fff"/></svg><div class="a" style="left:158px;top:423px;height:20px;line-height:20px;font-size:12px;color:#2f92d6"><u>A</u>raita-Dark+</div><svg class="a" style="left:313px;top:428px" width="7" height="10" viewBox="0 0 7 10"><path d="M0.5 0.5L6.5 5 0.5 9.5z" fill="#2f9ae6"/></svg><div class="a" style="left:158px;top:443px;height:20px;line-height:20px;font-size:12px;color:#2f92d6"><u>C</u>rystalBlue</div><div class="a" style="left:158px;top:463px;height:20px;line-height:20px;font-size:12px;color:#2f92d6"><u>d</u>efault</div><div class="a" style="left:158px;top:483px;height:20px;line-height:20px;font-size:12px;color:#2f92d6"><u>H</u>elix</div><div class="a" style="left:158px;top:503px;height:20px;line-height:20px;font-size:12px;color:#2f92d6"><u>I</u>ceClearlooks2-Debish</div><div class="a" style="left:158px;top:523px;height:20px;line-height:20px;font-size:12px;color:#2f92d6"><u>I</u>ceClearlooks2-Magi</div><div class="a" style="left:158px;top:543px;height:20px;line-height:20px;font-size:12px;color:#2f92d6"><u>I</u>ceClearlooks2-Ningen</div><div class="a" style="left:158px;top:563px;height:20px;line-height:20px;font-size:12px;color:#2f92d6"><u>I</u>ceClearlooks2-Scarlet</div><div class="a" style="left:158px;top:583px;height:20px;line-height:20px;font-size:12px;color:#2f92d6"><u>i</u>cedesert</div><div class="a" style="left:158px;top:603px;height:20px;line-height:20px;font-size:12px;color:#2f92d6"><u>I</u>nfadel2</div><svg class="a" style="left:313px;top:608px" width="7" height="10" viewBox="0 0 7 10"><path d="M0.5 0.5L6.5 5 0.5 9.5z" fill="#2f9ae6"/></svg><div class="a" style="left:158px;top:623px;height:20px;line-height:20px;font-size:12px;color:#2f92d6"><u>K</u>DE-Core</div><div class="a" style="left:158px;top:643px;height:20px;line-height:20px;font-size:12px;color:#2f92d6"><u>m</u>etal2</div><div class="a" style="left:158px;top:663px;height:20px;line-height:20px;font-size:12px;color:#2f92d6"><u>m</u>otif</div><div class="a" style="left:158px;top:683px;height:20px;line-height:20px;font-size:12px;color:#2f92d6"><u>N</u>anoBlue</div><div class="a" style="left:158px;top:703px;height:20px;line-height:20px;font-size:12px;color:#2f92d6"><u>w</u>in95</div><div class="a" style="left:158px;top:723px;height:20px;line-height:20px;font-size:12px;color:#2f92d6"><u>W</u>indows7ice1</div><svg class="a" style="left:144px;top:687px" width="10" height="10" viewBox="0 0 10 10"><path d="M5 0.5L9.5 5 5 9.5 0.5 5z" fill="#2f9ae6"/></svg>
<div class="a" style="left:138px;top:744px;width:187px;height:1px;background:#1c4458"></div>
<div class="a" style="left:158px;top:745px;height:20px;line-height:20px;font-size:12px;color:#2f92d6"><u>D</u>efault</div>
<div class="a" style="left:1021px;top:0;width:3px;height:771px;background:#444246"></div>
<div class="a" style="left:0;top:0;width:1px;height:767px;background:#3a3a3a"></div>
</body></html>
